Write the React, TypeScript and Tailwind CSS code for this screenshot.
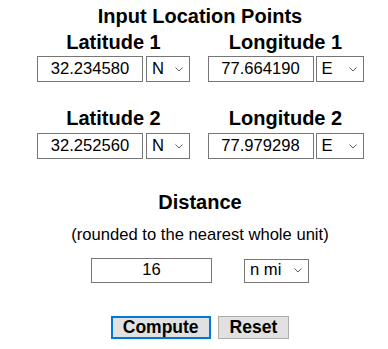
import React from "react";

function Chevron() {
  return (
    <svg width="8" height="5" viewBox="0 0 8 5" className="shrink-0">
      <path d="M0.5 0.5 L4 4 L7.5 0.5" fill="none" stroke="#606060" strokeWidth="1" />
    </svg>
  );
}

function Field({ value, w, h = "h-[26px]" }: { value: string; w: string; h?: string }) {
  return (
    <div
      className={`${w} ${h} border border-[#767676] bg-white flex items-center justify-center text-[16.6px] leading-none text-black`}
    >
      {value}
    </div>
  );
}

function Select({ value, w, h = "h-[26px]" }: { value: string; w: string; h?: string }) {
  return (
    <div
      className={`${w} ${h} border border-[#767676] bg-white flex items-center justify-between pl-[5px] pr-[6px] text-[16.6px] leading-none text-black`}
    >
      <span>{value}</span>
      <Chevron />
    </div>
  );
}

export default function App() {
  return (
    <div className="w-[388px] h-[349px] bg-white text-black font-['Liberation_Sans',Arial,sans-serif]">
      <div className="ml-[34px] w-[332px] pt-[4px] flex flex-col items-center">
        <div className="text-[20px] leading-[24px] font-bold">Input Location Points</div>

        <div className="flex w-full gap-[12px] mt-[2px]">
          <div className="w-[159px] flex flex-col items-center">
            <div className="text-[20px] leading-[24px] font-bold">Latitude 1</div>
            <div className="flex gap-[3px] mt-[2px]">
              <Field value="32.234580" w="w-[106px]" />
              <Select value="N" w="w-[44px]" />
            </div>
          </div>
          <div className="w-[161px] flex flex-col items-center">
            <div className="text-[20px] leading-[24px] font-bold">Longitude 1</div>
            <div className="flex gap-[2px] mt-[2px]">
              <Field value="77.664190" w="w-[106px]" />
              <Select value="E" w="w-[48px]" />
            </div>
          </div>
        </div>

        <div className="flex w-full gap-[12px] mt-[24px]">
          <div className="w-[159px] flex flex-col items-center">
            <div className="text-[20px] leading-[24px] font-bold">Latitude 2</div>
            <div className="flex gap-[3px] mt-[3px]">
              <Field value="32.252560" w="w-[106px]" />
              <Select value="N" w="w-[44px]" />
            </div>
          </div>
          <div className="w-[161px] flex flex-col items-center">
            <div className="text-[20px] leading-[24px] font-bold">Longitude 2</div>
            <div className="flex gap-[2px] mt-[3px]">
              <Field value="77.979298" w="w-[106px]" />
              <Select value="E" w="w-[48px]" />
            </div>
          </div>
        </div>

        <div className="text-[20px] leading-[24px] font-bold mt-[31px]">Distance</div>
        <div className="text-[16.6px] leading-[20px] mt-[11px]">(rounded to the nearest whole unit)</div>

        <div className="flex items-center gap-[32px] mt-[13px]">
          <Field value="16" w="w-[121px]" h="h-[25px]" />
          <Select value="n mi" w="w-[65px]" h="h-[24px]" />
        </div>

        <div className="flex gap-[7px] mt-[33px]">
          <button className="h-[23px] px-[10px] border-2 border-[#0078d7] bg-[#e1e1e1] text-[17.5px] leading-none font-bold text-black">
            Compute
          </button>
          <button className="h-[23px] px-[11px] border border-[#adadad] bg-[#e1e1e1] text-[17.5px] leading-none font-bold text-black">
            Reset
          </button>
        </div>
      </div>
    </div>
  );
}
